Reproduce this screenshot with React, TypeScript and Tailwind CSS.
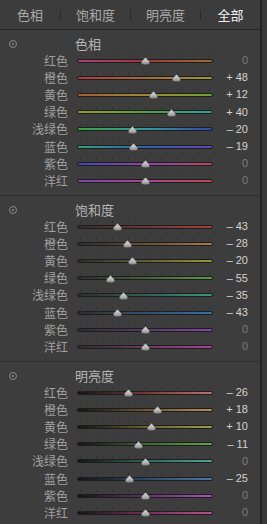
import React from "react";

type Row = { label: string; value: number; track: string };
type Section = { title: string; rows: Row[] };

const sections: Section[] = [
  {
    title: "色相",
    rows: [
      { label: "红色", value: 0, track: "from-[#a8407a] via-[#a03a3a] to-[#9a6a3c]" },
      { label: "橙色", value: 48, track: "from-[#a83a3a] via-[#a8683a] to-[#9a9a34]" },
      { label: "黄色", value: 12, track: "from-[#a85a34] via-[#9a8c34] to-[#70a034]" },
      { label: "绿色", value: 40, track: "from-[#9a9a34] via-[#50a040] to-[#349a9a]" },
      { label: "浅绿色", value: -20, track: "from-[#40a040] via-[#349a9a] to-[#3444a8]" },
      { label: "蓝色", value: -19, track: "from-[#34a080] via-[#3460a8] to-[#6044b8]" },
      { label: "紫色", value: 0, track: "from-[#4444b8] via-[#8c44a8] to-[#b84460]" },
      { label: "洋红", value: 0, track: "from-[#8044a8] via-[#a8449a] to-[#b84a4a]" },
    ],
  },
  {
    title: "饱和度",
    rows: [
      { label: "红色", value: -43, track: "from-[#2e2e2e] via-[#663838] to-[#a83e3e]" },
      { label: "橙色", value: -28, track: "from-[#2e2e2e] via-[#665038] to-[#a87a44]" },
      { label: "黄色", value: -20, track: "from-[#2e2e2e] via-[#606034] to-[#9a9634]" },
      { label: "绿色", value: -55, track: "from-[#2e2e2e] via-[#446238] to-[#5a9c44]" },
      { label: "浅绿色", value: -35, track: "from-[#2e2e2e] via-[#305e54] to-[#349880]" },
      { label: "蓝色", value: -43, track: "from-[#2e2e2e] via-[#32506c] to-[#3470a8]" },
      { label: "紫色", value: 0, track: "from-[#2e2e2e] via-[#58386c] to-[#8844a8]" },
      { label: "洋红", value: 0, track: "from-[#2e2e2e] via-[#6a3862] to-[#a8449a]" },
    ],
  },
  {
    title: "明亮度",
    rows: [
      { label: "红色", value: -26, track: "from-[#151515] via-[#743636] to-[#b87474]" },
      { label: "橙色", value: 18, track: "from-[#151515] via-[#745432] to-[#b88c5a]" },
      { label: "黄色", value: 10, track: "from-[#151515] via-[#66622c] to-[#a29c4a]" },
      { label: "绿色", value: -11, track: "from-[#151515] via-[#3e662e] to-[#68a04a]" },
      { label: "浅绿色", value: 0, track: "from-[#151515] via-[#2e665a] to-[#52a496]" },
      { label: "蓝色", value: -25, track: "from-[#151515] via-[#2e4a66] to-[#4a78a4]" },
      { label: "紫色", value: 0, track: "from-[#151515] via-[#662e74] to-[#aa52b8]" },
      { label: "洋红", value: 0, track: "from-[#151515] via-[#742e5a] to-[#b8528c]" },
    ],
  },
];

const tabs = [
  { name: "色相", w: "w-[61px]" },
  { name: "饱和度", w: "w-[70px]" },
  { name: "明亮度", w: "w-[70px]" },
  { name: "全部", w: "flex-1" },
];

function Thumb({ value }: { value: number }) {
  const left = 68.5 + value * 0.64 - 4.5;
  return (
    <svg
      width="9"
      height="8"
      viewBox="0 0 9 8"
      className="absolute top-[calc(50%-3.5px)]"
      style={{ left }}
    >
      <defs>
        <linearGradient id="tg" x1="0" y1="0" x2="0" y2="1">
          <stop offset="0" stopColor="#dadada" />
          <stop offset="0.6" stopColor="#b4b4b4" />
          <stop offset="1" stopColor="#7e7e7e" />
        </linearGradient>
      </defs>
      <path
        d="M4.5 0.3 C5.4 1.6 8.7 4 8.7 5.6 C8.7 7.2 6.8 7.8 4.5 7.8 C2.2 7.8 0.3 7.2 0.3 5.6 C0.3 4 3.6 1.6 4.5 0.3 Z"
        fill="url(#tg)"
        stroke="#4a4a4a"
        strokeWidth="0.5"
      />
    </svg>
  );
}

function Value({ value }: { value: number }) {
  if (value === 0) return <span className="text-[#7c7c7c]">0</span>;
  return (
    <span className="text-[#d2d2d2]">
      {value > 0 ? "+" : "–"}
      <span className="ml-[3px]">{Math.abs(value)}</span>
    </span>
  );
}

function SliderRow({ row }: { row: Row }) {
  return (
    <div className="flex h-[17.2px] items-center">
      <div className="w-[68px] text-right text-[12px] leading-none text-[#a0a0a0]">
        {row.label}
      </div>
      <div className="relative ml-[9px] h-full w-[136px]">
        <div className="absolute left-[3px] right-[3px] top-[calc(50%-5.5px)] flex h-[2px] justify-between">
          {Array.from({ length: 9 }).map((_, i) => (
            <span key={i} className="h-full w-px bg-[#2c2c2c]" />
          ))}
        </div>
        <div
          className={`absolute left-0 right-0 top-[calc(50%-2px)] h-[4px] rounded-full border border-[#1d1d1d] bg-linear-to-r ${row.track}`}
        />
        <Thumb value={row.value} />
      </div>
      <div className="w-[35px] text-right font-['Liberation_Sans',sans-serif] text-[11px] leading-none">
        <Value value={row.value} />
      </div>
    </div>
  );
}

export default function App() {
  return (
    <div className="flex h-[524px] w-[267px] overflow-hidden bg-[#3d3d3d] font-['Noto_Sans_CJK_SC','Noto_Sans',sans-serif]">
      <div className="flex w-[260px] flex-col">
        <div className="flex h-[30px] items-center border-b border-[#262626] bg-[#3c3c3c]">
          {tabs.map((t, i) => (
            <div key={t.name} className={`flex h-full items-center ${t.w}`}>
              <span
                className={`flex-1 text-center text-[13px] leading-none ${
                  i === 3 ? "text-[#f2f2f2]" : "text-[#a9a9a9]"
                }`}
              >
                {t.name}
              </span>
              {i < 3 && <span className="h-[10px] w-px bg-[#2a2a2a]" />}
            </div>
          ))}
        </div>

        {sections.map((s, si) => (
          <div
            key={s.title}
            className={`pt-[5px] ${si < 2 ? "border-b border-[#2e2e2e] pb-[5.5px]" : ""}`}
          >
            <div className="flex h-[17px] items-center">
              <div className="flex w-[26px] justify-center">
                <span className="flex h-[8px] w-[8px] items-center justify-center rounded-full border border-[#8a8a8a]">
                  <span className="h-[2px] w-[2px] rounded-full bg-[#8a8a8a]" />
                </span>
              </div>
              <span className="ml-[49px] text-[13px] leading-none text-[#b4b4b4]">
                {s.title}
              </span>
            </div>
            {s.rows.map((r) => (
              <SliderRow key={r.label} row={r} />
            ))}
          </div>
        ))}
      </div>
      <div className="w-[2px] bg-[#232323]" />
      <div className="flex-1 bg-[#3a3a3a]" />
    </div>
  );
}
